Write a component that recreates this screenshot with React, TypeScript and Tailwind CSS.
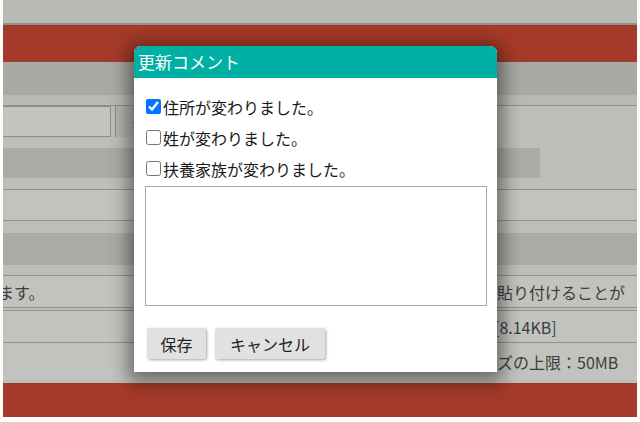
import React from "react";

const font = { fontFamily: '"Noto Sans CJK JP", "Liberation Sans", sans-serif' };

// Dimmed page behind the dialog
function Backdrop() {
  return (
    <div className="mx-[3px] flex flex-col text-[16px] text-[#3d3e3c]">
      <div className="h-[23px] bg-[#b9bbb6]" />
      <div className="h-[2px] bg-[#8f918c]" />
      <div className="h-[37px] bg-[#a53a29]" />
      <div className="h-[33px] bg-[#a7a9a4]" />
      <div className="h-[10px] bg-[#b7b9b4]" />
      <div className="h-[1px] bg-[#8f918c]" />
      <div className="flex h-[31px] bg-[#bcbeb9]">
        <div className="w-[108px] border border-l-0 border-[#8a8c87] bg-[#c2c4bf]" />
        <div className="ml-[4px] flex w-[60px] items-center border-l border-[#8a8c87] bg-[#b3b5b0] pl-[15px] text-[8px]">·</div>
      </div>
      <div className="h-[11px] bg-[#bcbeb9]" />
      <div className="flex h-[30px] bg-[#bcbeb9]">
        <div className="w-[537px] bg-[#a9aba6]" />
      </div>
      <div className="h-[11px] bg-[#bcbeb9]" />
      <div className="h-[1px] bg-[#8f918c]" />
      <div className="h-[30px] bg-[#c1c3be]" />
      <div className="h-[1px] bg-[#8f918c]" />
      <div className="h-[12px] bg-[#bcbeb9]" />
      <div className="h-[32px] bg-[#a9aba6]" />
      <div className="h-[10px] bg-[#bcbeb9]" />
      <div className="h-[1px] bg-[#8f918c]" />
      <div className="flex h-[31px] items-center overflow-hidden whitespace-nowrap bg-[#c1c3be]">
        <span className="-ml-[5px] w-[499px] shrink-0">ます。</span>
        <span className="shrink-0">貼り付けることが</span>
      </div>
      <div className="h-[1px] bg-[#8f918c]" />
      <div className="h-[2px] bg-[#bcbeb9]" />
      <div className="h-[1px] bg-[#8f918c]" />
      <div className="flex h-[31px] items-center overflow-hidden whitespace-nowrap bg-[#c1c3be] pl-[491px]">
        [8.14KB]
      </div>
      <div className="h-[1px] bg-[#8f918c]" />
      <div className="flex h-[37px] items-center overflow-hidden whitespace-nowrap bg-[#c1c3be] pl-[494px]">
        ズの上限：50MB
      </div>
      <div className="h-[3px] bg-[#bcbeb9]" />
      <div className="h-[34px] bg-[#a53a29]" />
    </div>
  );
}

const items = [
  { label: "住所が変わりました。", checked: true },
  { label: "姓が変わりました。", checked: false },
  { label: "扶養家族が変わりました。", checked: false },
];

export default function App() {
  return (
    <div className="relative h-[422px] w-[640px] overflow-hidden bg-white" style={font}>
      <Backdrop />

      <div className="absolute left-[134px] top-[46px] flex h-[326px] w-[363px] flex-col rounded-t-[7px] bg-white shadow-[0_4px_18px_6px_rgba(0,0,0,0.45)]">
        <div className="h-[32px] rounded-t-[7px] bg-[#00b0a4] pl-[4px] text-[17px] leading-[32px] text-white">
          更新コメント
        </div>
        <div className="flex flex-col pt-[13px] pl-[8px] text-[16px] text-[#1a1a1a]">
          {items.map((it) => (
            <label key={it.label} className="flex h-[31px] items-center">
              <input
                type="checkbox"
                defaultChecked={it.checked}
                className="mr-[2px] ml-[4px] h-[15px] w-[15px]"
              />
              <span className="leading-[20px]">{it.label}</span>
            </label>
          ))}
        </div>
        <textarea className="mt-[2px] ml-[11px] h-[120px] w-[342px] resize-none border border-[#a9a9a9] outline-none" />
        <div className="mt-[22px] ml-[13px] flex gap-[9px] text-[16px] text-[#222]">
          <button className="h-[31px] w-[59px] rounded-[2px] bg-[#e1e1e1] shadow-[1px_1px_3px_rgba(0,0,0,0.35)]">
            保存
          </button>
          <button className="h-[31px] w-[110px] rounded-[2px] bg-[#e1e1e1] shadow-[1px_1px_3px_rgba(0,0,0,0.35)]">
            キャンセル
          </button>
        </div>
      </div>
    </div>
  );
}
